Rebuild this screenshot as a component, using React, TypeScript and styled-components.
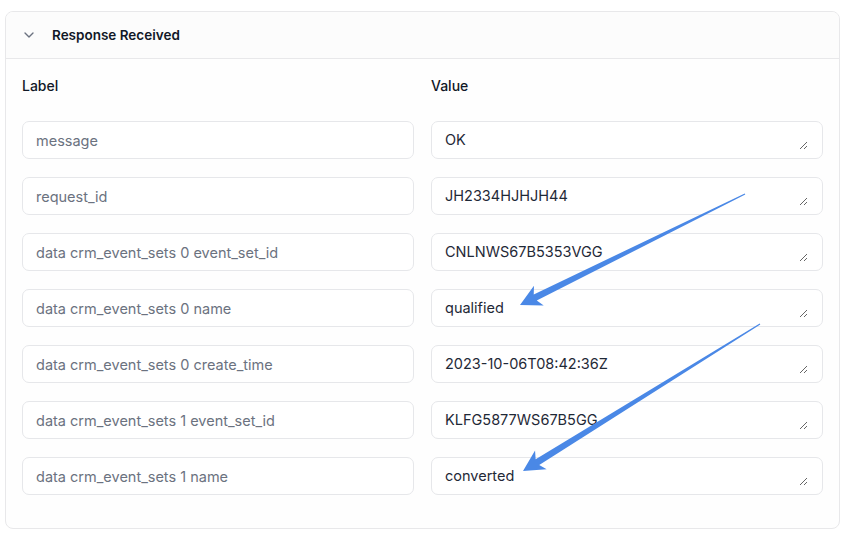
import React from 'react';
import styled, { createGlobalStyle } from 'styled-components';
import { ChevronDown } from 'lucide-react';

const GlobalStyle = createGlobalStyle`
  html, body {
    margin: 0;
    padding: 0;
    background: #ffffff;
  }
  body {
    font-family: Inter, "Noto Sans", "Liberation Sans", sans-serif;
    color: #111827;
  }
`;

type Field = { label: string; value: string };

const fields: Field[] = [
  { label: 'message', value: 'OK' },
  { label: 'request_id', value: 'JH2334HJHJH44' },
  { label: 'data crm_event_sets 0 event_set_id', value: 'CNLNWS67B5353VGG' },
  { label: 'data crm_event_sets 0 name', value: 'qualified' },
  { label: 'data crm_event_sets 0 create_time', value: '2023-10-06T08:42:36Z' },
  { label: 'data crm_event_sets 1 event_set_id', value: 'KLFG5877WS67B5GG' },
  { label: 'data crm_event_sets 1 name', value: 'converted' },
];

type Pt = [number, number];

// tapered annotation arrow, thin at the tail and fat towards the head
function arrowPoints(tail: Pt, tip: Pt, headLen = 21, headHalf = 11, shaftHalf = 3.4) {
  const dx = tail[0] - tip[0];
  const dy = tail[1] - tip[1];
  const len = Math.hypot(dx, dy);
  const u: Pt = [dx / len, dy / len];
  const n: Pt = [-u[1], u[0]];
  const at = (d: number, w: number): Pt => [tip[0] + u[0] * d + n[0] * w, tip[1] + u[1] * d + n[1] * w];
  const pts: Pt[] = [
    tip,
    at(headLen, headHalf),
    at(headLen - 4, shaftHalf),
    at(len, 0.6),
    at(len, -0.6),
    at(headLen - 4, -shaftHalf),
    at(headLen, -headHalf),
  ];
  return pts.map((p) => p.join(',')).join(' ');
}

export default function App() {
  return (
    <>
      <GlobalStyle />
      <Page>
        <Card>
          <Header>
            <ChevronDown size={16} strokeWidth={2} color="#6b7280" />
            <Title>Response Received</Title>
          </Header>
          <Body>
            <Grid>
              <ColumnHead>Label</ColumnHead>
              <ColumnHead>Value</ColumnHead>
            </Grid>
            <Rows>
              {fields.map((f) => (
                <React.Fragment key={f.label}>
                  <LabelInput readOnly placeholder={f.label} />
                  <ValueBox>
                    <ValueArea readOnly rows={1} defaultValue={f.value} />
                  </ValueBox>
                </React.Fragment>
              ))}
            </Rows>
          </Body>
        </Card>
        <Annotations width="863" height="544" viewBox="0 0 863 544">
          <polygon points={arrowPoints([745, 194], [520, 305])} fill="#4a88e6" />
          <polygon points={arrowPoints([760, 324], [523, 471])} fill="#4a88e6" />
        </Annotations>
      </Page>
    </>
  );
}

const Page = styled.div`
  position: relative;
  width: 863px;
  height: 544px;
  padding: 11px 0 0 5px;
  box-sizing: border-box;
`;

const Card = styled.section`
  width: 835px;
  box-sizing: border-box;
  border: 1px solid #e8e8ea;
  border-radius: 8px;
  background: #fefefe;
  overflow: hidden;
`;

const Header = styled.div`
  display: flex;
  align-items: center;
  gap: 15px;
  height: 46px;
  padding: 0 0 0 15px;
  background: #fcfcfc;
  border-bottom: 1px solid #e8e8ea;
`;

const Title = styled.span`
  font-size: 13.5px;
  font-weight: 600;
  color: #111827;
`;

const Body = styled.div`
  padding: 17px 16px 33px 16px;
  display: flex;
  flex-direction: column;
  gap: 25px;
`;

const Grid = styled.div`
  display: grid;
  grid-template-columns: 392px 392px;
  column-gap: 17px;
`;

const Rows = styled(Grid)`
  row-gap: 18px;
`;

const ColumnHead = styled.div`
  font-size: 14px;
  font-weight: 500;
  line-height: 20px;
  color: #111827;
`;

const LabelInput = styled.input`
  box-sizing: border-box;
  width: 100%;
  height: 38px;
  margin: 0;
  padding: 8px 13px;
  border: 1px solid #e6e7ea;
  border-radius: 7px;
  background: #ffffff;
  font-family: Inter, "Noto Sans", "Liberation Sans", sans-serif;
  font-size: 14.5px;
  line-height: 20px;
  outline: none;

  &::placeholder {
    color: #6b7280;
    opacity: 1;
  }
`;

const ValueBox = styled.div`
  box-sizing: border-box;
  height: 38px;
  padding: 8px 14px 8px 13px;
  border: 1px solid #e6e7ea;
  border-radius: 7px;
  background: #ffffff;
`;

const ValueArea = styled.textarea`
  display: block;
  box-sizing: border-box;
  width: 100%;
  height: 20px;
  margin: 0;
  padding: 0;
  border: none;
  background: transparent;
  font-family: Inter, "Noto Sans", "Liberation Sans", sans-serif;
  font-size: 14.5px;
  line-height: 20px;
  color: #1f2937;
  resize: vertical;
  overflow: hidden;
  outline: none;
`;

const Annotations = styled.svg`
  position: absolute;
  left: 0;
  top: 0;
  pointer-events: none;
`;
